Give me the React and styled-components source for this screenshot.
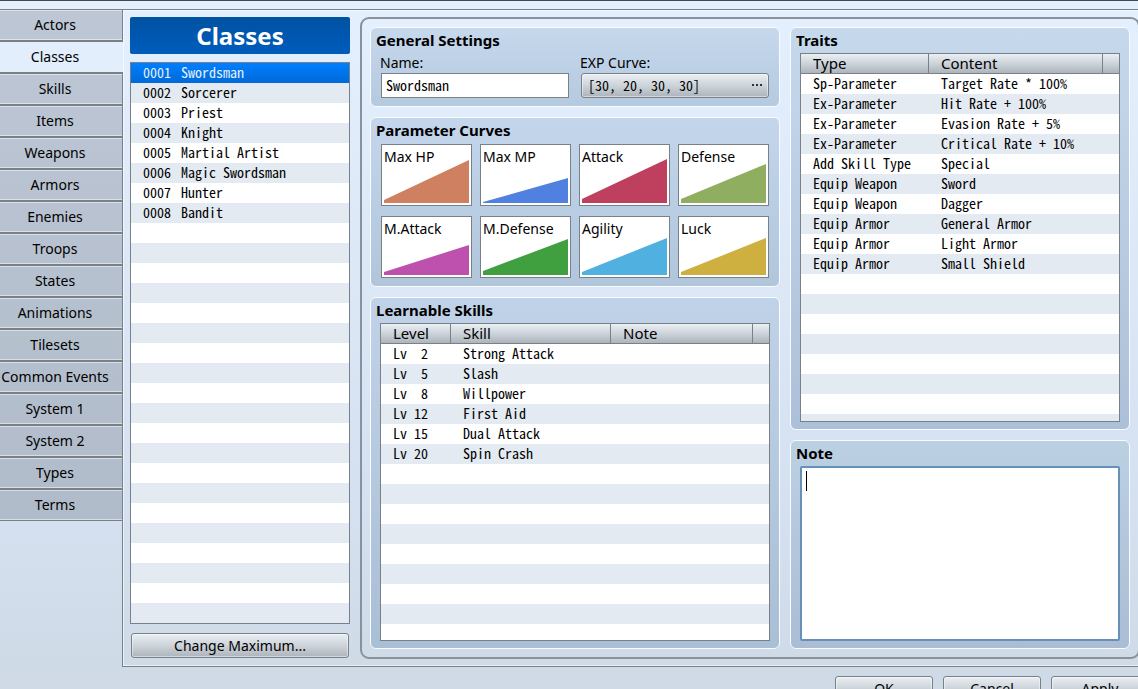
import React, { useState } from 'react'
import styled, { createGlobalStyle } from 'styled-components'

const tabs = ['Actors', 'Classes', 'Skills', 'Items', 'Weapons', 'Armors', 'Enemies', 'Troops', 'States',
  'Animations', 'Tilesets', 'Common Events', 'System 1', 'System 2', 'Types', 'Terms']

const classes = ['Swordsman', 'Sorcerer', 'Priest', 'Knight', 'Martial Artist', 'Magic Swordsman', 'Hunter', 'Bandit']

// start and end are the heights of the curve at the first and the last level
const curves = [
  { name: 'Max HP', color: '#ce8060', start: 3, end: 43 },
  { name: 'Max MP', color: '#5080e0', start: 1, end: 25 },
  { name: 'Attack', color: '#be405e', start: 4, end: 44 },
  { name: 'Defense', color: '#90ae60', start: 4, end: 39 },
  { name: 'M.Attack', color: '#be50ae', start: 3, end: 30 },
  { name: 'M.Defense', color: '#40a040', start: 4, end: 36 },
  { name: 'Agility', color: '#50b0e0', start: 3, end: 37 },
  { name: 'Luck', color: '#ceb040', start: 3, end: 37 },
]

const skills = [
  [2, 'Strong Attack'],
  [5, 'Slash'],
  [8, 'Willpower'],
  [12, 'First Aid'],
  [15, 'Dual Attack'],
  [20, 'Spin Crash'],
]

const traits = [
  ['Sp-Parameter', 'Target Rate * 100%'],
  ['Ex-Parameter', 'Hit Rate + 100%'],
  ['Ex-Parameter', 'Evasion Rate + 5%'],
  ['Ex-Parameter', 'Critical Rate + 10%'],
  ['Add Skill Type', 'Special'],
  ['Equip Weapon', 'Sword'],
  ['Equip Weapon', 'Dagger'],
  ['Equip Armor', 'General Armor'],
  ['Equip Armor', 'Light Armor'],
  ['Equip Armor', 'Small Shield'],
]

export default function App() {
  const [tab, setTab] = useState('Classes')
  const [selected, setSelected] = useState(0)
  const [name, setName] = useState('Swordsman')
  const [note, setNote] = useState('')

  return (
    <Window>
      <GlobalStyle />
      <Frame>
        <Tabs>
          {tabs.map(t => (
            <Tab key={t} $active={t === tab} onClick={() => setTab(t)}>{t}</Tab>
          ))}
        </Tabs>

        <Page>
          <Sidebar>
            <Heading>Classes</Heading>
            <List>
              {classes.map((c, index) => (
                <li key={c}>
                  <ListItem $active={index === selected} onClick={() => setSelected(index)}>
                    <span>{String(index + 1).padStart(4, '0')}</span>
                    <span>{c}</span>
                  </ListItem>
                </li>
              ))}
            </List>
            <MaximumButton>Change Maximum...</MaximumButton>
          </Sidebar>

          <Editor>
            <Column>
              <Panel $from="#c5d8ec" $to="#b5c9df">
                <PanelTitle>General Settings</PanelTitle>
                <Fields>
                  <Field>
                    <label htmlFor="name">Name:</label>
                    <TextBox id="name" value={name} onChange={e => setName(e.target.value)} />
                  </Field>
                  <Field>
                    <label htmlFor="exp">EXP Curve:</label>
                    <CurveButton id="exp">
                      <span>[30, 20, 30, 30]</span>
                      <Dots viewBox="0 0 11 2" aria-hidden="true">
                        <path d="M0 0h2v2H0zM4 0h2v2H4zM8 0h2v2H8z" fill="#333" />
                      </Dots>
                    </CurveButton>
                  </Field>
                </Fields>
              </Panel>

              <Panel $from="#c3d6ec" $to="#b1c6da">
                <PanelTitle>Parameter Curves</PanelTitle>
                <CurveGrid>
                  {curves.map(c => (
                    <Curve key={c.name}>
                      <span>{c.name}</span>
                      <svg viewBox="0 0 85 44" preserveAspectRatio="none" aria-hidden="true">
                        <polygon fill={c.color} points={`0,44 0,${44 - c.start} 85,${44 - c.end} 85,44`} />
                      </svg>
                    </Curve>
                  ))}
                </CurveGrid>
              </Panel>

              <Panel $from="#c0d2e8" $to="#a9bfd5" $grow>
                <PanelTitle>Learnable Skills</PanelTitle>
                <TableBox>
                  <Table>
                    <colgroup>
                      <Col $width={70} />
                      <Col $width={160} />
                      <col />
                      <Col $width={16} />
                    </colgroup>
                    <thead>
                      <tr><th>Level</th><th>Skill</th><th>Note</th><th aria-label="Scroll" /></tr>
                    </thead>
                    <tbody>
                      {skills.map(([level, skill]) => (
                        <tr key={skill}>
                          <td>Lv {String(level).padStart(2, ' ')}</td>
                          <td>{skill}</td>
                          <td />
                          <td />
                        </tr>
                      ))}
                    </tbody>
                  </Table>
                </TableBox>
              </Panel>
            </Column>

            <Column>
              <Panel $from="#c5d8ec" $to="#adc0d9" $grow>
                <PanelTitle>Traits</PanelTitle>
                <TableBox>
                  <Table>
                    <colgroup>
                      <Col $width={128} />
                      <col />
                      <Col $width={16} />
                    </colgroup>
                    <thead>
                      <tr><th>Type</th><th>Content</th><th aria-label="Scroll" /></tr>
                    </thead>
                    <tbody>
                      {traits.map(([type, content]) => (
                        <tr key={content}>
                          <td>{type}</td>
                          <td>{content}</td>
                          <td />
                        </tr>
                      ))}
                    </tbody>
                  </Table>
                </TableBox>
              </Panel>

              <Panel $from="#bcd0e4" $to="#aabdd4">
                <PanelTitle as="label" htmlFor="note">Note</PanelTitle>
                <NoteBox>
                  <textarea id="note" value={note} onChange={e => setNote(e.target.value)} />
                  {!note && <Caret />}
                </NoteBox>
              </Panel>
            </Column>
          </Editor>
        </Page>
      </Frame>

      <Footer>
        <Button>OK</Button>
        <Button>Cancel</Button>
        <Button>Apply</Button>
      </Footer>
    </Window>
  )
}

const GlobalStyle = createGlobalStyle`
  * {
    box-sizing: border-box;
  }
  body {
    margin: 0;
    overflow: hidden;
    color: #000;
    font: 14px/20px "Noto Sans", sans-serif;
  }
  button, input, textarea {
    font: inherit;
    color: inherit;
  }
  ul {
    list-style: none;
    margin: 0;
    padding: 0;
  }
`

const mono = `
  font-family: "Noto Sans CJK JP", "Noto Sans Mono", monospace;
  font-feature-settings: "hwid";
  white-space: pre;
`

const metal = `
  background: linear-gradient(#eaeff3, #cfd6dc 45%, #adb4bb);
`

const Window = styled.div`
  min-height: 100vh;
  border-top: 1px solid #3f4c4e;
  padding-top: 8px;
  background: linear-gradient(#e5f0ff, #d4e0ef 75%, #ced9e5);
`

const Frame = styled.div`
  display: flex;
`

const Tabs = styled.nav`
  display: flex;
  flex-direction: column;
  flex: 0 0 122px;
`

const Tab = styled.button`
  height: 32px;
  padding: 0 12px 0 0;
  white-space: nowrap;
  border: 0 solid #7a8087;
  border-width: 1px 0;
  background: rgba(80, 90, 100, 0.27);
  box-shadow: inset 0 1px rgba(255, 255, 255, 0.5), inset 0 -1px rgba(255, 255, 255, 0.5);
  ${props => props.$active && `
    z-index: 1;
    margin-right: -1px;
    padding-right: 13px;
    background: #e3eefd;
    box-shadow: none;
  `}
`

const Page = styled.main`
  flex: 1;
  min-width: 0;
  display: flex;
  gap: 10px;
  padding: 7px 0 7px 7px;
  border: 1px solid #7a8087;
  border-right: 0;
  box-shadow: inset 1px 1px rgba(255, 255, 255, 0.6), inset 0 -1px rgba(255, 255, 255, 0.6);
`

const Sidebar = styled.section`
  flex: 0 0 220px;
  display: flex;
  flex-direction: column;
  padding-bottom: 1px;
`

const Heading = styled.h1`
  margin: 0 0 8px;
  border-radius: 2px;
  background: linear-gradient(#0052a2, #005cbc);
  color: #fff;
  font-size: 24px;
  line-height: 37px;
  text-align: center;
`

const List = styled.ul`
  height: 562px;
  border: 1px solid #7a8087;
  background: repeating-linear-gradient(#fff 0 20px, #e3eaf1 20px 40px);
`

const ListItem = styled.button`
  display: flex;
  gap: 10px;
  width: 100%;
  height: 20px;
  padding: 0 12px;
  border: 0;
  background: none;
  ${mono}
  line-height: 18px;
  ${props => props.$active && `
    background: linear-gradient(#007fff, #0069d6);
    color: #e4f0fc;
  `}
`

const Button = styled.button`
  width: 98px;
  height: 25px;
  padding: 0;
  border: 1px solid #7a8087;
  border-radius: 3px;
  ${metal}
  box-shadow: inset 0 0 0 1px rgba(255, 255, 255, 0.45);
`

const MaximumButton = styled(Button)`
  width: auto;
  margin: 9px 1px 0;
`

/* runs under the right edge of the window */
const Editor = styled.section`
  flex: 1;
  min-width: 0;
  display: grid;
  grid-template-columns: 410fr 340fr;
  gap: 10px;
  margin-right: -2px;
  padding: 8px;
  border: 2px solid #89919a;
  border-radius: 9px;
`

const Column = styled.div`
  display: flex;
  flex-direction: column;
  gap: 10px;
  min-width: 0;
`

const Panel = styled.section`
  display: flex;
  flex-direction: column;
  flex: ${props => props.$grow ? '1' : 'none'};
  padding: 2px 9px 7px;
  border: 1px solid #f8fbff;
  border-radius: 6px;
  background: linear-gradient(${props => props.$from}, ${props => props.$to});
`

const PanelTitle = styled.h2`
  margin: 0 -4px 3px;
  font-size: 15px;
  font-weight: 700;
  line-height: 20px;
`

const Fields = styled.div`
  display: grid;
  grid-template-columns: 1fr 1fr;
  gap: 12px;
  padding: 0 1px 1px;
`

const Field = styled.div`
  display: flex;
  flex-direction: column;

  label {
    margin-left: -1px;
  }
`

const TextBox = styled.input`
  width: 100%;
  height: 25px;
  padding: 0 4px 2px;
  border: 1px solid #7a8087;
  background: #fff;
  ${mono}
`

const CurveButton = styled(Button)`
  display: flex;
  align-items: center;
  justify-content: space-between;
  width: 100%;
  padding: 0 5px 1px 6px;
  ${mono}
`

const Dots = styled.svg`
  width: 11px;
  height: 2px;
`

const CurveGrid = styled.div`
  display: grid;
  grid-template-columns: repeat(4, 1fr);
  gap: 10px 8px;
  padding: 1px;
`

const Curve = styled.button`
  display: grid;
  height: 62px;
  padding: 2px;
  border: 1px solid #7a8087;
  background: #fff;
  text-align: left;

  span, svg {
    grid-area: 1 / 1;
  }
  svg {
    align-self: end;
    display: block;
    width: 100%;
    height: 44px;
  }
  span {
    align-self: start;
  }
`

const TableBox = styled.div`
  flex: 1;
  border: 1px solid #7a8087;
  background: repeating-linear-gradient(#e3eaf1 0 20px, #fff 20px 40px);
`

const Table = styled.table`
  width: 100%;
  table-layout: fixed;
  border-collapse: separate;
  border-spacing: 0;

  th, td {
    height: 20px;
    padding: 0 0 0 12px;
    text-align: left;
    line-height: 19px;
  }
  th {
    border: 0 solid #7a8087;
    border-width: 0 1px 1px 0;
    ${metal}
    font-size: 15px;
    font-weight: 400;
  }
  th:last-child {
    border-right: 0;
  }
  td {
    padding-bottom: 2px;
    line-height: 18px;
    ${mono}
  }
`

const Col = styled.col`
  width: ${props => props.$width}px;
`

const NoteBox = styled.div`
  position: relative;

  textarea {
    display: block;
    width: 100%;
    height: 175px;
    padding: 3px 4px;
    border: 2px solid #6790b9;
    border-radius: 2px;
    outline: 0;
    resize: none;
    background: #fff;
    ${mono}
    white-space: pre-wrap;
  }
`

const Caret = styled.span`
  position: absolute;
  top: 5px;
  left: 6px;
  width: 1px;
  height: 20px;
  background: #000;
  pointer-events: none;
`

const Footer = styled.footer`
  display: flex;
  justify-content: flex-end;
  gap: 10px;
  margin: 9px -11px 0 0;
`
